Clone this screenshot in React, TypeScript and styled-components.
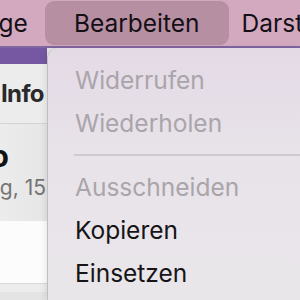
import styled, { createGlobalStyle } from 'styled-components';

const GlobalStyle = createGlobalStyle`
  html, body {
    margin: 0;
    padding: 0;
    overflow: hidden;
    background: #e9e6ea;
  }

  body {
    font-family: Inter, "Noto Sans", "Liberation Sans", sans-serif;
    -webkit-font-smoothing: antialiased;
  }
`;

const Screen = styled.div`
  width: 300px;
  height: 300px;
  overflow: hidden;
  display: flex;
  flex-direction: column;
  background: #e9e6ea;
`;

const MenuBar = styled.div`
  height: 46px;
  flex: none;
  display: flex;
  align-items: center;
  gap: 2px;
  margin-left: -64px;
  background: #d3a9bf;
  border-bottom: 2px solid #80659f;
  white-space: nowrap;
`;

const MenuTitle = styled.div<{ $active?: boolean }>`
  height: 44px;
  display: flex;
  align-items: center;
  margin-left: ${({ $active }) => ($active ? 4 : 0)}px;
  padding: 0 ${({ $active }) => ($active ? 29 : 11)}px;
  border-radius: 9px;
  background: ${({ $active }) => ($active ? '#b78fa2' : 'transparent')};
  font-size: 24.5px;
  font-weight: 400;
  color: #141015;
`;

const Desktop = styled.div`
  flex: 1;
  display: flex;
  min-height: 0;
`;

const BackWindow = styled.div`
  width: 47px;
  flex: none;
  display: flex;
  flex-direction: column;
  overflow: hidden;
  white-space: nowrap;
  background: #ffffff;
`;

const WindowTitleStrip = styled.div`
  height: 16px;
  flex: none;
  background: #7558a1;
`;

const InspectorHeader = styled.div`
  height: 59px;
  flex: none;
  display: flex;
  align-items: center;
  justify-content: flex-end;
  padding-right: 3px;
  background: #ececec;
  border-bottom: 1px solid #d4d4d4;
  font-size: 24px;
  font-weight: 700;
  letter-spacing: -0.6px;
  color: #2a2a2a;
`;

const EventBlock = styled.div`
  height: 97px;
  flex: none;
  display: flex;
  flex-direction: column;
  align-items: flex-end;
  padding-top: 16px;
  box-sizing: border-box;
  background: linear-gradient(90deg, #ececec 0%, #e6e6e6 100%);
`;

const EventTitle = styled.div`
  font-size: 30px;
  font-weight: 700;
  line-height: 32px;
  color: #111111;
  margin-right: 38px;
`;

const EventDate = styled.div`
  font-size: 21px;
  line-height: 28px;
  color: #747474;
  margin-top: 2px;
  margin-right: 1px;
`;

const WhiteArea = styled.div`
  height: 62px;
  flex: none;
  background: #fcfcfc;
`;

const FooterBand = styled.div`
  flex: 1;
  background: #e4e4e4;
  border-top: 1px solid #d8d8d8;
  box-shadow: inset 0 8px 0 #ececec;
`;

const Menu = styled.div`
  flex: 1;
  margin-left: 1px;
  padding-top: 10px;
  border-top-left-radius: 11px;
  background: linear-gradient(180deg, #e4dae6 0%, #e8e3e9 45%, #e9e6ea 100%);
  box-shadow: -1px 0 0 rgba(0, 0, 0, 0.12), -3px 0 6px rgba(0, 0, 0, 0.08);
  display: flex;
  flex-direction: column;
  white-space: nowrap;
`;

const MenuItem = styled.div<{ $disabled?: boolean }>`
  height: 43px;
  flex: none;
  display: flex;
  align-items: center;
  padding-left: 27px;
  font-size: 24.5px;
  color: ${({ $disabled }) => ($disabled ? '#a9a5aa' : '#161416')};
`;

const Separator = styled.div`
  height: 2px;
  flex: none;
  margin: 10px 0 9px 26px;
  background: #cfcacf;
`;

export default function App() {
  return (
    <Screen>
      <GlobalStyle />
      <MenuBar>
        <MenuTitle>Ablage</MenuTitle>
        <MenuTitle $active>Bearbeiten</MenuTitle>
        <MenuTitle>Darstellung</MenuTitle>
      </MenuBar>

      <Desktop>
        <BackWindow>
          <WindowTitleStrip />
          <InspectorHeader>Info</InspectorHeader>
          <EventBlock>
            <EventTitle>o</EventTitle>
            <EventDate>g, 15</EventDate>
          </EventBlock>
          <WhiteArea />
          <FooterBand />
        </BackWindow>

        <Menu>
          <MenuItem $disabled>Widerrufen</MenuItem>
          <MenuItem $disabled>Wiederholen</MenuItem>
          <Separator />
          <MenuItem $disabled>Ausschneiden</MenuItem>
          <MenuItem>Kopieren</MenuItem>
          <MenuItem>Einsetzen</MenuItem>
        </Menu>
      </Desktop>
    </Screen>
  );
}
